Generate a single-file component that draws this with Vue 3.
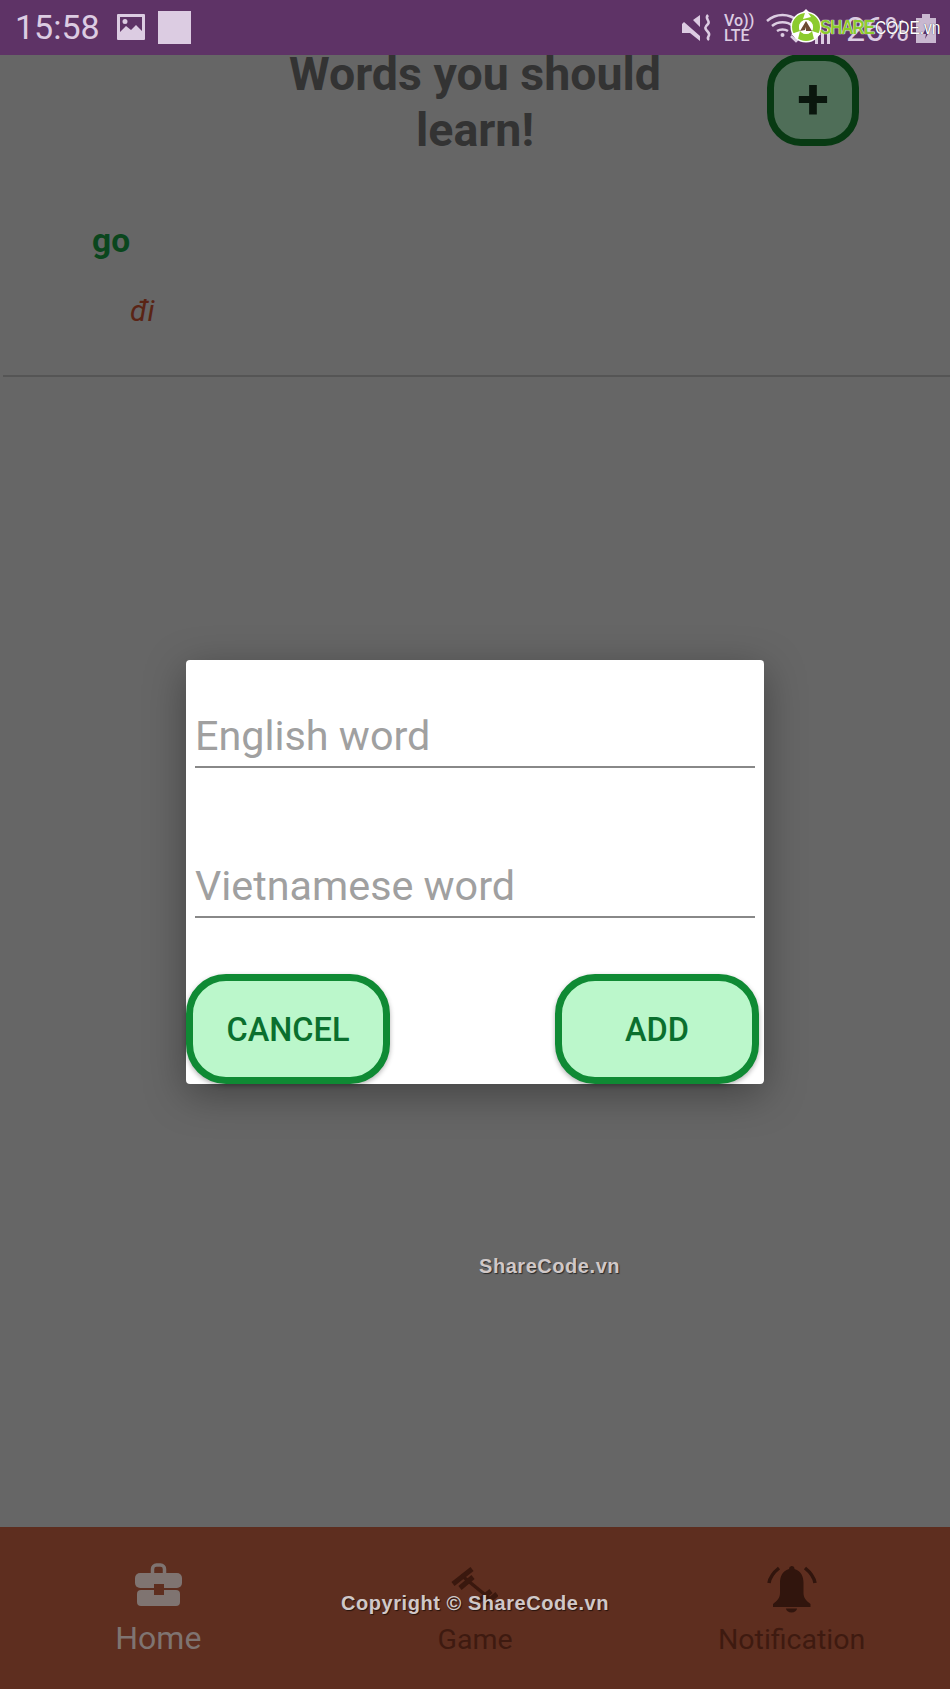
<script setup>
const tabs = [
  { key: 'home', label: 'Home' },
  { key: 'game', label: 'Game' },
  { key: 'bell', label: 'Notification' }
]
</script>

<template>
  <div class="screen">
    <header class="status">
      <div class="status-left">
        <span class="clock">15:58</span>
        <svg class="pic" viewBox="0 0 28 26"><path fill="#dccce2" fill-rule="evenodd" d="M1 0h26a1 1 0 0 1 1 1v24a1 1 0 0 1-1 1H1a1 1 0 0 1-1-1V1a1 1 0 0 1 1-1zM3 3v15l6-6 5 4 5-5 6 6V3zM8 5a2.500 2.500 0 1 1 0 5 2.500 2.500 0 0 1 0-5z"/></svg>
        <span class="square"></span>
      </div>
      <div class="status-right">
        <svg class="mute" viewBox="0 0 30 27"><path fill="#dccce2" d="M11 6L18 1V13zM2 8L18 22V27L8 19H0V10z"/><path fill="none" stroke="#dccce2" stroke-width="2.500" d="M26 1c-4 4 3 6 0 9s-4 4 0 8-3 5 1 8"/></svg>
        <span class="volte">Vo))<br />LTE</span>
        <svg class="wifi" viewBox="0 0 33 25"><path fill="none" stroke="#dccce2" stroke-width="2.500" d="M1 8c9-8 22-8 31 0M6 13c6-5 15-5 21 0M11 18c3-2 8-2 11 0"/><circle cx="16.500" cy="22" r="2" fill="#dccce2"/></svg>
        <svg class="signal" viewBox="0 0 48 16"><path fill="none" stroke="#dccce2" stroke-width="2.500" d="M10 1v12M5 8l5 5 5-5"/><path fill="#dccce2" d="M29 8h3v8h-3zM35 4h3v12h-3zM41 0h3v16h-3z"/></svg>
        <span class="pct">26%</span>
        <svg class="battery" viewBox="0 0 20 29"><path fill="#c9b8d0" d="M6 0h8v4h6v25H0V4h6z"/><path fill="#5e3366" d="M11 12l-4 8h3l-1 5 4-7h-3z"/></svg>
      </div>
    </header>

    <main class="content">
      <section class="top">
        <h1 class="title">Words you should learn!</h1>
        <button class="fab"><span>+</span></button>
      </section>

      <section class="word">
        <div class="en">go</div>
        <div class="vi">đi</div>
      </section>
    </main>

    <nav class="tabs">
      <div v-for="t in tabs" :key="t.key" class="tab" :class="{ active: t.key === 'home' }">
        <div class="slot">
          <svg v-if="t.key === 'home'" class="i-home" viewBox="0 0 47 43">
            <path fill="none" stroke="#7f7471" stroke-width="3.500" d="M17.500 11V6a4 4 0 0 1 4-4h4a4 4 0 0 1 4 4v5"/>
            <rect y="10" width="47" height="15" rx="5" fill="#7f7471"/>
            <rect x="2" y="27" width="43" height="16" rx="4" fill="#7f7471"/>
            <rect x="19" y="21" width="10" height="11" fill="#5e2e1f"/>
          </svg>
          <svg v-else-if="t.key === 'game'" class="i-game" viewBox="0 0 47 42">
            <g fill="none" stroke="#3a180e">
              <path stroke-width="3.500" d="M10 12L38 35"/>
              <path stroke-width="5" d="M2 21L21 6M9 25L22 14M28 38L40 28M33 42L46 31"/>
            </g>
          </svg>
          <svg v-else class="i-bell" viewBox="0 0 50 48">
            <path fill="#31150d" d="M24.500 1a3 3 0 0 1 3 3c7 2 9 8 9 14v10c0 5 3 8 7 11v3H6v-3c4-3 7-6 7-11V18c0-6 2-12 9-14a3 3 0 0 1 2.500-3zM19 43.500h11a5.500 4 0 0 1-11 0z"/>
            <path fill="none" stroke="#31150d" stroke-width="3.500" d="M12 3C7 7 3 12 2 18M38 3c5 4 9 9 10 15"/>
          </svg>
        </div>
        <span class="tab-label">{{ t.label }}</span>
      </div>
    </nav>

    <div class="dialog">
      <div class="field"><span>English word</span></div>
      <div class="field"><span>Vietnamese word</span></div>
      <div class="actions">
        <button class="btn">CANCEL</button>
        <button class="btn">ADD</button>
      </div>
    </div>

    <div class="mark mark-mid">ShareCode.vn</div>
    <div class="mark mark-copy">Copyright © ShareCode.vn</div>
    <div class="logo">
      <svg class="logo-icon" viewBox="0 0 34 34">
        <circle cx="17" cy="18" r="15.500" fill="#fff"/>
        <path fill="#fff" d="M17 0l6 6H11z"/>
        <circle cx="17" cy="18" r="10.500" fill="none" stroke="#8ccb2e" stroke-width="7"/>
        <path fill="#fff" d="M17 1l5 7-8 2zM2 25l9-3-2 8zM32 25l-9-3 2 8z"/>
        <circle cx="17" cy="18" r="7" fill="#fff"/>
        <path fill="#6b4a32" d="M17 12l3 5-3 1-3-1zM11 22l3-5 3 1-1 3zM23 22l-6 0 0-4 3-1z"/>
      </svg>
      <span class="logo-text"><span class="logo-a">SHARE</span><span class="logo-b">CODE.vn</span></span>
    </div>
  </div>
</template>

<style>
html, body { margin: 0; background: #666; }
</style>

<style scoped>
.screen {
  position: relative;
  width: 950px;
  height: 1689px;
  display: flex;
  flex-direction: column;
  background: #666;
  overflow: hidden;
  font-family: Roboto, "Liberation Sans", sans-serif;
}
.status {
  height: 55px;
  flex: none;
  background: #5e3366;
  display: flex;
  justify-content: space-between;
  align-items: center;
  color: #dccce2;
  position: relative;
  z-index: 2;
}
.status-left { display: flex; align-items: center; padding-left: 15px; }
.clock { font-size: 34px; font-weight: 400; line-height: 55px; width: 102px; }
.pic { width: 28px; height: 26px; margin-right: 13px; margin-top: -1px; }
.square { width: 33px; height: 33px; background: #dccce2; margin-top: -1px; }
.status-right { display: flex; align-items: center; padding-right: 14px; }
.mute { width: 30px; height: 27px; margin-right: 12px; }
.volte { font-size: 16px; font-weight: 500; line-height: 15px; width: 42px; }
.wifi { width: 33px; height: 25px; margin-top: -4px; }
.signal { width: 48px; height: 16px; margin: 16px 12px 0 -13px; }
.pct { font-size: 34px; font-weight: 400; width: 70px; white-space: nowrap; margin-top: 3px; }
.battery { width: 20px; height: 29px; margin-top: 1px; }

.content { flex: 1; min-height: 0; }
.top {
  display: grid;
  grid-template-columns: 1fr 400px 1fr;
}
.title {
  grid-column: 2;
  margin: -9px 0 0;
  text-align: center;
  color: #333;
  font-size: 46.500px;
  line-height: 56px;
  font-weight: 700;
}
.fab {
  grid-column: 3;
  justify-self: start;
  margin: -1px 0 0 92px;
  width: 92px;
  height: 92px;
  padding: 0 0 2px;
  box-sizing: border-box;
  border: 7px solid #083a13;
  border-radius: 34px;
  background: #4f6e58;
  display: flex;
  align-items: center;
  justify-content: center;
  color: #0a160d;
  font-family: Roboto, sans-serif;
  font-size: 58px;
  font-weight: 700;
  line-height: 1;
}
.word {
  padding-bottom: 44px;
  margin-left: 3px;
  border-bottom: 2px solid #555;
}
.en {
  margin: 63px 0 0 89px;
  font-size: 33.500px;
  font-weight: 700;
  line-height: 40px;
  color: #0a461d;
}
.vi {
  margin: 30px 0 0 127px;
  font-size: 30px;
  font-style: italic;
  line-height: 40px;
  color: #5a2415;
}
.tabs {
  height: 162px;
  flex: none;
  background: #5e2e1f;
  display: grid;
  grid-template-columns: repeat(3, 316.660px);
}
.tab {
  display: flex;
  flex-direction: column;
  align-items: center;
  padding-top: 36px;
  color: #3e1a10;
}
.tab.active { color: #7f7471; }
.slot { height: 43px; display: flex; justify-content: center; align-items: flex-start; }
.i-home { width: 47px; height: 43px; flex: none; }
.i-game { width: 47px; height: 42px; flex: none; }
.i-bell { width: 50px; height: 48px; flex: none; margin-top: 2px; }
.tab-label { font-size: 28.500px; line-height: 36px; margin-top: 16px; }
.tab.active .tab-label { font-size: 32px; margin-top: 14px; }

.dialog {
  position: absolute;
  left: 186px;
  top: 660px;
  width: 578px;
  height: 424px;
  box-sizing: border-box;
  padding: 0 9px;
  background: #fff;
  border-radius: 4px;
  box-shadow: 0 10px 40px rgba(0, 0, 0, .35);
  display: flex;
  flex-direction: column;
}
.field {
  height: 108px;
  border-bottom: 2px solid #888;
  display: flex;
  align-items: flex-end;
  color: #a0a0a0;
  font-size: 41.300px;
  font-weight: 400;
  line-height: 56px;
  padding-bottom: 2px;
  box-sizing: border-box;
}
.field + .field { margin-top: 41px; height: 109px; }
.actions {
  margin: auto -9px 0;
  display: flex;
  justify-content: space-between;
  padding-right: 5px;
}
.btn {
  width: 204px;
  height: 110px;
  box-sizing: border-box;
  padding-top: 3px;
  border: 7px solid #0f8a34;
  border-radius: 40px;
  background: #bbf7cb;
  color: #0a6f2e;
  font-family: Roboto, sans-serif;
  font-size: 32.500px;
  font-weight: 500;
  box-shadow: 0 2px 5px rgba(0, 0, 0, .3);
}
.mark {
  position: absolute;
  color: #d0c8c8;
  font-family: "Liberation Sans", Arial, sans-serif;
  font-weight: 700;
  font-size: 20px;
  letter-spacing: .55px;
  white-space: nowrap;
  text-shadow: 1px 1px 1px rgba(0,0,0,.6);
}
.mark-mid { left: 479px; top: 1255px; }
.mark-copy { left: 341px; top: 1592px; }
.logo {
  position: absolute;
  left: 789px;
  top: 9px;
  display: flex;
  align-items: center;
  z-index: 3;
  font-family: "Liberation Sans", Arial, sans-serif;
  white-space: nowrap;
  height: 34px;
}
.logo-icon { width: 34px; height: 34px; flex: none; }
.logo-text {
  font-size: 17px;
  line-height: 20px;
  margin: 4px 0 0 -3px;
  transform: scaleY(1.2);
}
.logo-a {
  color: #8ccb2e;
  font-weight: 700;
  letter-spacing: -1.100px;
  text-shadow: 0 0 1px #fff, 0 0 1px #fff;
}
.logo-b {
  color: #fff;
  font-size: 15.500px;
  margin-left: 1px;
  text-shadow: 0 0 1px #2e2233;
}
</style>
